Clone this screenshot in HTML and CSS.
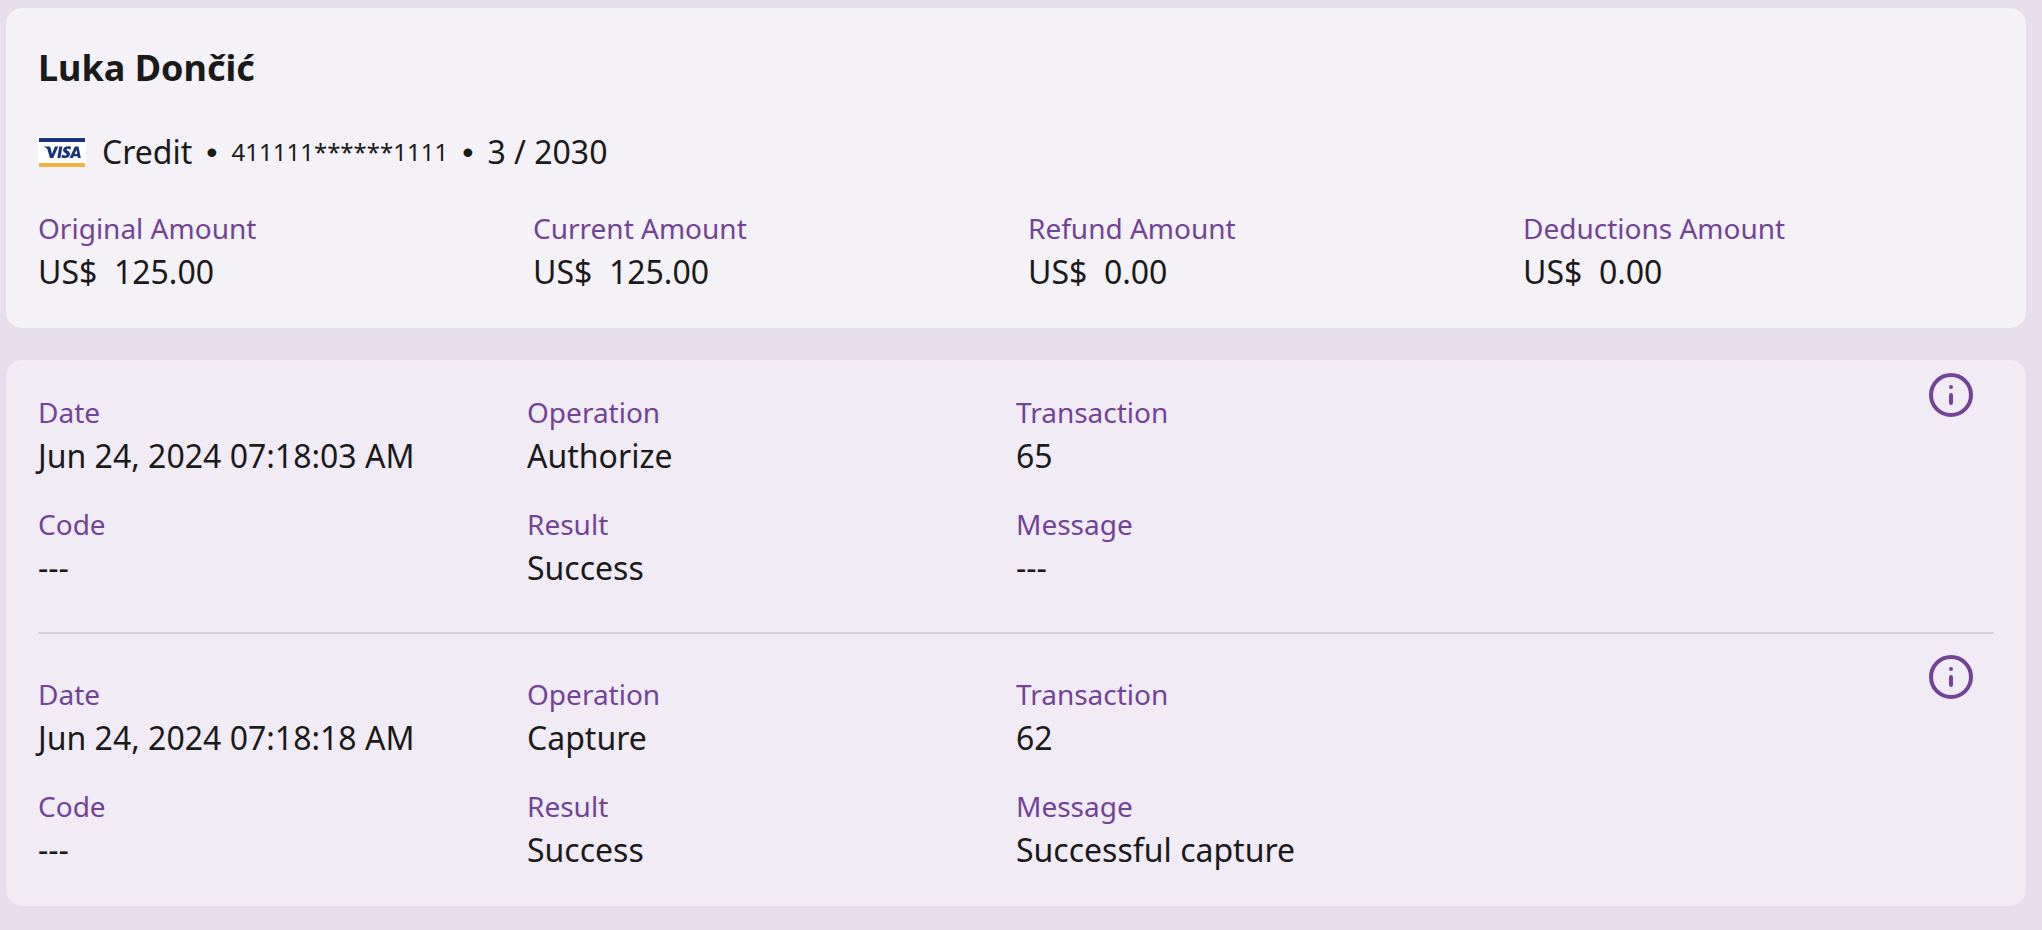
FILE: index.html
```html
<!DOCTYPE html>
<html lang="en">
<head>
<meta charset="utf-8">
<title>Payment details</title>
<link rel="stylesheet" href="styles.css">
</head>
<body>
<main class="page">
  <section class="card summary">
    <h1 class="name">Luka Dončić</h1>
    <div class="method">
      <svg class="visa" viewBox="0 0 48 30" role="img" aria-label="Visa"><rect width="48" height="30" fill="#fff"/><path d="M1 1h46v4H1z" fill="#1a3380"/><path d="M1 26h46v4H1z" fill="#f2b23f"/><g fill="#1a3380"><path d="M6 9.500h5q1.300 0 1.600 1.300L13.900 17l3.100-7.500h3.300L15.200 21h-3.300L9.400 12.200Q9 11 6 9.800z"/><path d="M21.300 9.500h3.100L22.400 21h-3.100z"/><path d="M33 9.700l-.5 2.600c-2-.8-4-.8-4 .3 0 1.200 3.500 1.500 3.500 4.400 0 4-4.800 4.800-8.500 3.500l.5-2.700c2.200 1 4.600 1 4.600-.3 0-1.400-3.500-1.500-3.500-4.400 0-3.500 4.200-4.500 7.900-3.400z"/><path fill-rule="evenodd" d="M37.500 9.500h3L42.800 21h-2.900l-.3-1.800h-4l-.8 1.800h-3.200l4.900-10.700q.4-.8 1-.8zM38.500 12.800l-1.900 4.200H39.200z"/></g></svg>
      <span>Credit</span><span class="dot">•</span><span class="number">411111******1111</span><span class="dot">•</span><span>3 / 2030</span>
    </div>
    <dl class="amounts">
      <div><dt>Original Amount</dt><dd>US$&nbsp; 125.00</dd></div>
      <div><dt>Current Amount</dt><dd>US$&nbsp; 125.00</dd></div>
      <div><dt>Refund Amount</dt><dd>US$&nbsp; 0.00</dd></div>
      <div><dt>Deductions Amount</dt><dd>US$&nbsp; 0.00</dd></div>
    </dl>
  </section>
  <section class="card history">
    <article class="entry">
      <dl class="fields">
        <div><dt>Date</dt><dd>Jun 24, 2024 07:18:03 AM</dd></div>
        <div><dt>Operation</dt><dd>Authorize</dd></div>
        <div><dt>Transaction</dt><dd>65</dd></div>
        <div><dt>Code</dt><dd>---</dd></div>
        <div><dt>Result</dt><dd>Success</dd></div>
        <div><dt>Message</dt><dd>---</dd></div>
      </dl>
      <button class="info" type="button" aria-label="Transaction information"><svg viewBox="0 0 48 48" fill="none" stroke="currentColor" stroke-width="4" stroke-linecap="round"><circle cx="24" cy="24" r="20"/><path d="M24 24v8M24 16h0"/></svg></button>
    </article>
    <article class="entry">
      <dl class="fields">
        <div><dt>Date</dt><dd>Jun 24, 2024 07:18:18 AM</dd></div>
        <div><dt>Operation</dt><dd>Capture</dd></div>
        <div><dt>Transaction</dt><dd>62</dd></div>
        <div><dt>Code</dt><dd>---</dd></div>
        <div><dt>Result</dt><dd>Success</dd></div>
        <div><dt>Message</dt><dd>Successful capture</dd></div>
      </dl>
      <button class="info" type="button" aria-label="Transaction information"><svg viewBox="0 0 48 48" fill="none" stroke="currentColor" stroke-width="4" stroke-linecap="round"><circle cx="24" cy="24" r="20"/><path d="M24 24v8M24 16h0"/></svg></button>
    </article>
  </section>
</main>
</body>
</html>
```

FILE: styles.css
```css
* { box-sizing: border-box; }
body { margin: 0; background: #e6deec; color: #1a1a1a; font: 32px/44px "Noto Sans", sans-serif; }
.page { display: flex; flex-direction: column; gap: 32px; padding: 8px 16px 24px 6px; }
.card { border-radius: 16px; }
.summary { padding: 36px 32px 34px; background: #f4f1f7; }
.history { padding: 30px 32px 34px; background: #f1ebf6; }
.name { margin: 0 0 38px; font-size: 36px; line-height: 48px; font-weight: 700; }
.method { display: flex; align-items: center; gap: 14px; margin-bottom: 32px; }
.visa { width: 48px; height: 30px; margin-right: 2px; }
.dot { font-family: "Liberation Sans", sans-serif; }
.number { font-size: 24px; }
dl, dd { margin: 0; }
dt { color: #734397; font-size: 28px; line-height: 44px; }
.amounts { display: grid; grid-template-columns: repeat(4, 1fr); column-gap: 24px; }
.entry { display: grid; }
.entry + .entry { margin-top: 42px; padding-top: 38px; border-top: 2px solid #d3d2da; }
.fields { grid-area: 1 / 1; display: grid; grid-template-columns: 1fr 1fr 2fr; row-gap: 24px; }
.info { grid-area: 1 / 1; justify-self: end; align-self: start; width: 48px; height: 48px; margin: -19px 19px 0 0; padding: 0; border: 0; background: none; color: #734397; cursor: pointer; }
.info svg { display: block; width: 48px; height: 48px; }
```
